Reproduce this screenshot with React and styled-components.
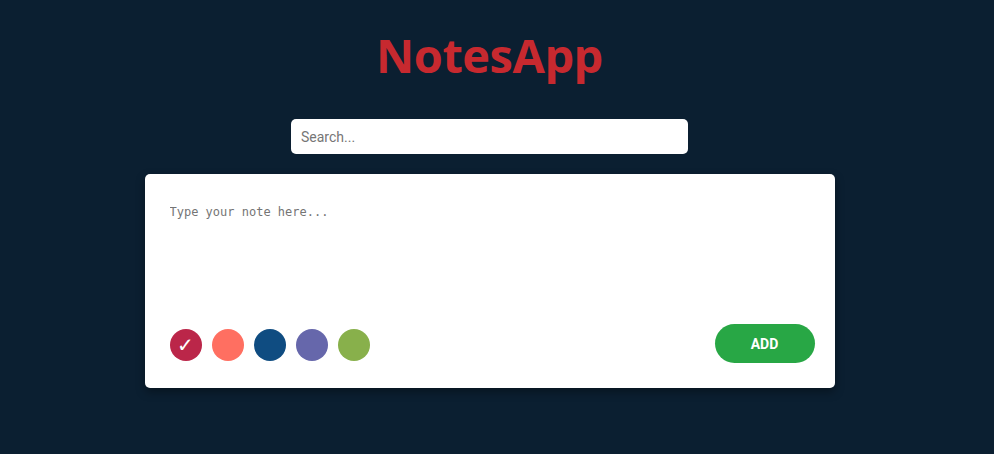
import { useState } from "react";
import styled, { createGlobalStyle } from "styled-components";

const colors = ["#bb2649", "#ff6f61", "#0f4c81", "#6667ab", "#88b04b"];

const App = () => {
  const [selected, setSelected] = useState(0);

  return (
    <>
      <GlobalStyle />
      <Page>
        <Title>NotesApp</Title>
        <SearchInput placeholder="Search..." />
        <NoteCard>
          <NoteArea placeholder="Type your note here..." />
          <Footer>
            <Swatches>
              {colors.map((c, i) => (
                <Swatch key={c} color={c} onClick={() => setSelected(i)}>
                  {selected === i && "✓"}
                </Swatch>
              ))}
            </Swatches>
            <AddButton>ADD</AddButton>
          </Footer>
        </NoteCard>
      </Page>
    </>
  );
};

export default App;

const GlobalStyle = createGlobalStyle`
  html, body {
    margin: 0;
    background: #0b1f31;
  }
  body {
    font-family: Roboto, "Liberation Sans", sans-serif;
  }
`;

const Page = styled.div`
  min-height: 454px;
  display: flex;
  flex-direction: column;
  align-items: center;
  padding: 26px 15px 0 0;
  box-sizing: border-box;
`;

const Title = styled.h1`
  margin: 0;
  font-family: "Open Sans", "Noto Sans", sans-serif;
  font-weight: 700;
  font-size: 47px;
  line-height: 58px;
  color: #c7292f;
  letter-spacing: -0.5px;
`;

const SearchInput = styled.input`
  margin-top: 35px;
  width: 397px;
  height: 35px;
  box-sizing: border-box;
  border: none;
  border-radius: 5px;
  padding: 0 10px;
  font-family: Roboto, "Liberation Sans", sans-serif;
  font-size: 14px;
  outline: none;
  &::placeholder {
    color: #767676;
  }
`;

const NoteCard = styled.div`
  margin-top: 20px;
  width: 690px;
  height: 214px;
  box-sizing: border-box;
  background: #fff;
  border-radius: 5px;
  box-shadow: 0 4px 10px rgba(0, 0, 0, 0.35);
  padding: 31px 20px 25px 25px;
  display: flex;
  flex-direction: column;
  justify-content: space-between;
`;

const NoteArea = styled.textarea`
  border: none;
  resize: none;
  outline: none;
  padding: 0;
  height: 90px;
  font-family: "DejaVu Sans Mono", "Liberation Mono", monospace;
  font-size: 12px;
  &::placeholder {
    color: #757575;
  }
`;

const Footer = styled.div`
  display: flex;
  align-items: center;
  justify-content: space-between;
`;

const Swatches = styled.div`
  display: flex;
  gap: 10px;
  margin-top: 2px;
`;

const Swatch = styled.button`
  width: 32px;
  height: 32px;
  border-radius: 50%;
  border: none;
  padding: 0;
  background: ${(p) => p.color};
  color: #fff;
  font-size: 20px;
  font-family: "DejaVu Sans", sans-serif;
  display: flex;
  align-items: center;
  justify-content: center;
  cursor: pointer;
`;

const AddButton = styled.button`
  width: 100px;
  height: 39px;
  border: none;
  border-radius: 20px;
  background: #28a745;
  color: #fff;
  font-family: Roboto, "Liberation Sans", sans-serif;
  font-weight: 700;
  font-size: 14px;
  cursor: pointer;
`;
